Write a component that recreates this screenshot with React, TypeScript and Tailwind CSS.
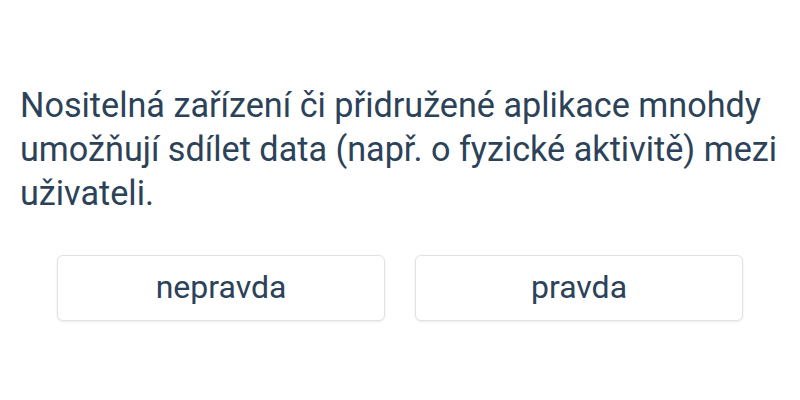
export default function App() {
  return (
    <div className="w-[800px] h-[400px] bg-white flex flex-col" style={{ fontFamily: "Roboto, sans-serif" }}>
      <p className="mt-[83px] px-5 text-[34.2px] leading-[44px] text-[#2b4259]">
        Nositelná zařízení či přidružené aplikace mnohdy umožňují sdílet data (např. o fyzické aktivitě) mezi uživateli.
      </p>
      <div className="mt-[40px] flex justify-center gap-[30px]">
        <button className="w-[328px] h-[66px] rounded-md border border-[#e2e2e2] bg-white shadow-[0_1px_3px_rgba(0,0,0,0.08)] text-[32px] leading-none pb-[3px] text-[#2b4259]">
          nepravda
        </button>
        <button className="w-[328px] h-[66px] rounded-md border border-[#e2e2e2] bg-white shadow-[0_1px_3px_rgba(0,0,0,0.08)] text-[32px] leading-none pb-[3px] text-[#2b4259]">
          pravda
        </button>
      </div>
    </div>
  );
}
